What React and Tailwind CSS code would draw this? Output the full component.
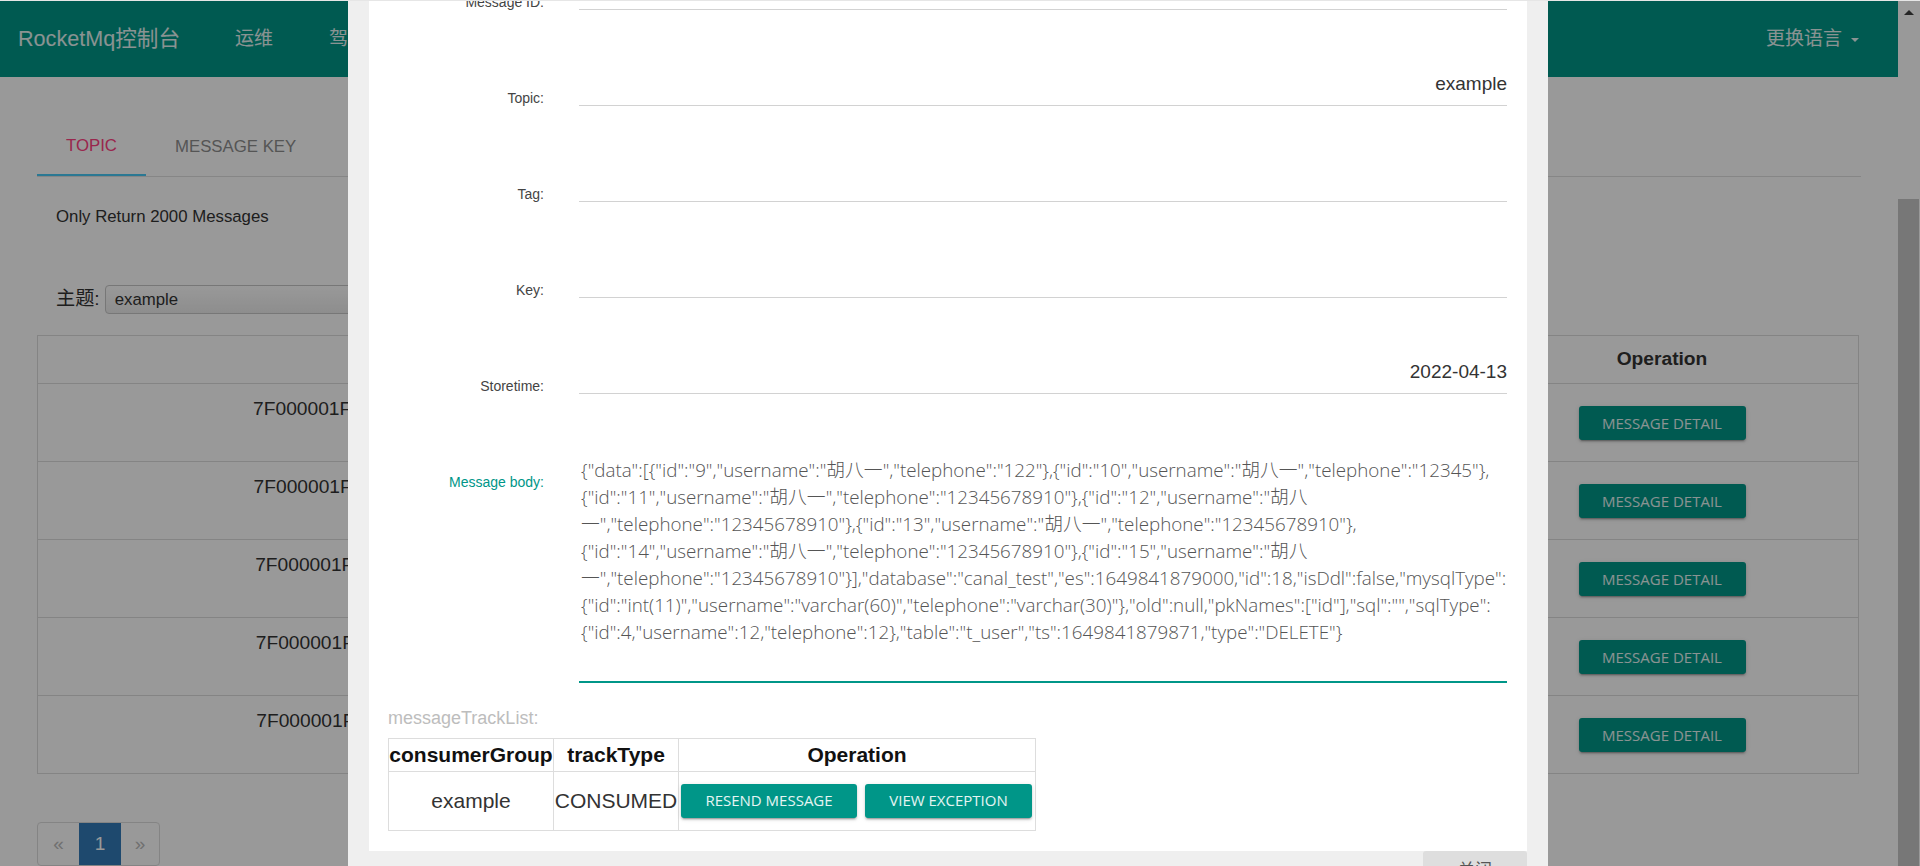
import React from "react";

const bodyLines = [
  '{"data":[{"id":"9","username":"胡八一","telephone":"122"},{"id":"10","username":"胡八一","telephone":"12345"},',
  '{"id":"11","username":"胡八一","telephone":"12345678910"},{"id":"12","username":"胡八',
  '一","telephone":"12345678910"},{"id":"13","username":"胡八一","telephone":"12345678910"},',
  '{"id":"14","username":"胡八一","telephone":"12345678910"},{"id":"15","username":"胡八',
  '一","telephone":"12345678910"}],"database":"canal_test","es":1649841879000,"id":18,"isDdl":false,"mysqlType":',
  '{"id":"int(11)","username":"varchar(60)","telephone":"varchar(30)"},"old":null,"pkNames":["id"],"sql":"","sqlType":',
  '{"id":4,"username":12,"telephone":12},"table":"t_user","ts":1649841879871,"type":"DELETE"}',
];

const fields = [
  ["Message ID:", "7F000001F1A818B4AAC21F5A5C6C0000"],
  ["Topic:", "example"],
  ["Tag:", ""],
  ["Key:", ""],
  ["Storetime:", "2022-04-13"],
];

const msgIds = [
  "7F000001F1A818B4AAC21F5A5C6C0000",
  "7F000001F1A818B4AAC21F5A5D3A0001",
  "7F000001F1A818B4AAC21F5A5E480002",
  "7F000001F1A818B4AAC21F5A5F160003",
  "7F000001F1A818B4AAC21F5A60240004",
];

const navLinks = ["运维", "驾驶舱", "集群", "主题", "消费者", "生产者", "消息", "消息轨迹"];

function GreenButton({ children, className = "" }) {
  return (
    <button
      className={
        "h-[34px] rounded-[3px] bg-[#009688] font-['Open_Sans',sans-serif] text-[15px] uppercase text-white/90 shadow-[0_2px_2px_0_rgba(0,0,0,0.14),0_3px_1px_-2px_rgba(0,0,0,0.2),0_1px_5px_0_rgba(0,0,0,0.12)] " +
        className
      }
    >
      {children}
    </button>
  );
}

export default function App() {
  return (
    <div className="relative h-[866px] w-[1920px] overflow-hidden bg-white font-['Liberation_Sans','Noto_Sans_CJK_SC',sans-serif] text-[#333]">
      <div className="flex h-full">
        {/* page */}
        <div className="flex w-[1898px] flex-col pt-px">
          <nav className="flex h-[76px] items-center bg-[#009688] text-white/90">
            <span className="ml-[18px] text-[21.6px]">RocketMq控制台</span>
            {navLinks.map((l, i) => (
              <span key={l} className={(i === 0 ? "ml-[55px] " : "ml-[56px] ") + "text-[19px]"}>
                {l}
              </span>
            ))}
            <span className="ml-auto mr-[39px] flex items-center gap-[9px] text-[19px]">
              更换语言
              <span className="mt-[2px] h-0 w-0 border-x-[4px] border-t-[4px] border-x-transparent border-t-white/90" />
            </span>
          </nav>

          <div className="px-[37px]">
            <div className="mt-[40px] flex h-[60px] border-b border-[#e0e0e0] text-[16.8px]">
              <div className="flex w-[109px] items-center justify-center border-b-2 border-[#48c8f5] text-[#ff4081]">TOPIC</div>
              <div className="flex items-center px-[29px] text-[#8e8e8e]">MESSAGE KEY</div>
            </div>
            <p className="ml-[19px] mt-[28px] text-[16.8px] leading-[24px]">Only Return 2000 Messages</p>
            <div className="ml-[19px] mt-[56px] flex h-[29px] items-center">
              <span className="text-[19.2px]">主题:</span>
              <div className="ml-[5px] flex h-[29px] w-[700px] items-center rounded-[4px] border border-[#c6c6c6] bg-linear-to-b from-white to-[#ececec] pl-[9px] text-[16.8px]">
                example
              </div>
            </div>

            <table className="mt-[21px] w-[1821px] table-fixed border-collapse border border-[#dddddd] text-[19.2px]">
              <colgroup>
                <col className="w-[796px]" />
                <col className="w-[304px]" />
                <col className="w-[328px]" />
                <col className="w-[393px]" />
              </colgroup>
              <thead>
                <tr className="h-[48px]">
                  <th className="border border-[#dddddd] font-bold">Message ID</th>
                  <th className="border border-[#dddddd] font-bold">Tag</th>
                  <th className="border border-[#dddddd] font-bold">Message Key</th>
                  <th className="border border-[#dddddd] font-bold">Operation</th>
                </tr>
              </thead>
              <tbody>
                {msgIds.map((id) => (
                  <tr key={id} className="h-[78px]">
                    <td className="border border-[#dddddd] pt-[13px] text-center align-top leading-[24px]">{id}</td>
                    <td className="border border-[#dddddd] pt-[13px] text-center align-top leading-[24px]"></td>
                    <td className="border border-[#dddddd] pt-[13px] text-center align-top leading-[24px]">2022-04-13</td>
                    <td className="border border-[#dddddd] pt-[22px] text-center align-top">
                      <GreenButton className="w-[167px]">Message Detail</GreenButton>
                    </td>
                  </tr>
                ))}
              </tbody>
            </table>

            <div className="mt-[48px] flex h-[44px] w-[123px] overflow-hidden rounded-[4px] border border-[#dddddd] text-[19px]">
              <span className="flex w-[41px] items-center justify-center text-[#bbbbbb]">«</span>
              <span className="flex w-[42px] items-center justify-center bg-[#337ab7] text-white">1</span>
              <span className="flex flex-1 items-center justify-center text-[#bbbbbb]">»</span>
            </div>
          </div>
        </div>

        {/* scrollbar */}
        <div className="relative w-[22px] bg-white">
          <div className="absolute left-1/2 top-[10px] h-0 w-0 -translate-x-1/2 border-x-[5px] border-b-[5px] border-x-transparent border-b-[#404040]" />
          <div className="absolute bottom-0 left-[0px] top-[199px] w-[21px] bg-[#c6c6c6]" />
        </div>
      </div>

      {/* backdrop */}
      <div className="absolute inset-0 bg-black/40" />

      {/* modal */}
      <div className="absolute left-[348px] top-0 flex h-[866px] w-[1200px] flex-col overflow-hidden bg-[#efefef] px-[21px]">
        <div className="-mt-[86px] shrink-0 bg-white pb-[20px] pr-[20px]">
          {fields.map(([label, value]) => (
            <div key={label} className="flex h-[96px] items-end">
              <label className="-mb-[2px] w-[175px] shrink-0 text-right text-[14px] leading-[20px] text-[#444]">{label}</label>
              <div className="ml-[35px] h-[40px] min-w-0 flex-1 border-b border-[#d2d2d2] text-right text-[19px] leading-[36px] text-[#333]">
                {value}
              </div>
            </div>
          ))}

          <div className="flex">
            <label className="mt-[78px] w-[175px] shrink-0 text-right text-[14px] leading-[20px] text-[#009688]">Message body:</label>
            <div className="ml-[35px] min-w-0 flex-1 border-b-2 border-[#009688] pb-[35px] pl-[2px] pt-[63px] font-['Open_Sans','Noto_Sans_CJK_SC',sans-serif] text-[18.8px] font-light leading-[27px] text-[#555]">
              {bodyLines.map((l, i) => (
                <div key={i} className="whitespace-nowrap">{l}</div>
              ))}
            </div>
          </div>

          <div className="pl-[19px]">
            <div className="mt-[23px] text-[18px] leading-[24px] text-[#bdbdbd]">messageTrackList:</div>
            <table className="mt-[8px] table-fixed border-collapse border border-[#dddddd] text-[21px]">
              <colgroup>
                <col className="w-[165px]" />
                <col className="w-[125px]" />
                <col className="w-[357px]" />
              </colgroup>
              <thead>
                <tr className="h-[32px]">
                  <th className="border border-[#dddddd] px-0 font-bold text-[#111]">consumerGroup</th>
                  <th className="border border-[#dddddd] px-0 font-bold text-[#111]">trackType</th>
                  <th className="border border-[#dddddd] px-0 font-bold text-[#111]">Operation</th>
                </tr>
              </thead>
              <tbody>
                <tr className="h-[59px]">
                  <td className="border border-[#dddddd] text-center">example</td>
                  <td className="border border-[#dddddd] text-center">CONSUMED</td>
                  <td className="border border-[#dddddd] pl-[2px]">
                    <div className="flex gap-[8px]">
                      <GreenButton className="w-[176px]">Resend Message</GreenButton>
                      <GreenButton className="w-[167px]">View Exception</GreenButton>
                    </div>
                  </td>
                </tr>
              </tbody>
            </table>
          </div>
        </div>
        <div className="flex justify-end">
          <button className="h-[40px] w-[104px] rounded-[3px] bg-[#dedede] text-[17px] text-[#555]">关闭</button>
        </div>
      </div>

      {/* top window line */}
      <div className="absolute left-0 right-0 top-0 h-px bg-[#e6e6e6]" />
    </div>
  );
}
